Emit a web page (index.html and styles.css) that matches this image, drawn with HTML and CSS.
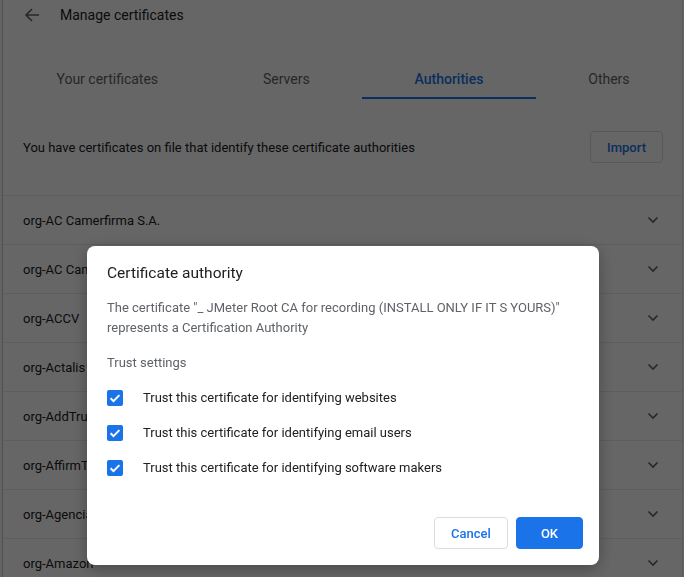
FILE: index.html
```html
<!DOCTYPE html>
<html>
<head>
<meta charset="utf-8">
<link rel="stylesheet" href="styles.css">
</head>
<body>
<div class="page">
  <div class="card">
    <div class="header">
      <svg class="back" width="16" height="16" viewBox="0 0 16 16"><path d="M15 8H2.5M8 2L2 8l6 6" fill="none" stroke="#5f6368" stroke-width="1.6"/></svg>
      <span class="title">Manage certificates</span>
    </div>
    <div class="tabs">
      <div class="tab">Your certificates</div>
      <div class="tab">Servers</div>
      <div class="tab active">Authorities</div>
      <div class="tab">Others</div>
    </div>
    <div class="intro">
      <span>You have certificates on file that identify these certificate authorities</span>
      <button class="import">Import</button>
    </div>
    <div class="row"><span>org-AC Camerfirma S.A.</span><svg class="chev" width="20" height="20" viewBox="0 0 20 20"><path d="M5.5 7.5L10 12l4.5-4.5" fill="none" stroke="#5f6368" stroke-width="1.6"/></svg></div>
    <div class="row"><span>org-AC Camerfirma SA CIF A82743287</span><svg class="chev" width="20" height="20" viewBox="0 0 20 20"><path d="M5.5 7.5L10 12l4.5-4.5" fill="none" stroke="#5f6368" stroke-width="1.6"/></svg></div>
    <div class="row"><span>org-ACCV</span><svg class="chev" width="20" height="20" viewBox="0 0 20 20"><path d="M5.5 7.5L10 12l4.5-4.5" fill="none" stroke="#5f6368" stroke-width="1.6"/></svg></div>
    <div class="row"><span>org-Actalis S.p.A./03358520967</span><svg class="chev" width="20" height="20" viewBox="0 0 20 20"><path d="M5.5 7.5L10 12l4.5-4.5" fill="none" stroke="#5f6368" stroke-width="1.6"/></svg></div>
    <div class="row"><span>org-AddTrust AB</span><svg class="chev" width="20" height="20" viewBox="0 0 20 20"><path d="M5.5 7.5L10 12l4.5-4.5" fill="none" stroke="#5f6368" stroke-width="1.6"/></svg></div>
    <div class="row"><span>org-AffirmTrust</span><svg class="chev" width="20" height="20" viewBox="0 0 20 20"><path d="M5.5 7.5L10 12l4.5-4.5" fill="none" stroke="#5f6368" stroke-width="1.6"/></svg></div>
    <div class="row"><span>org-Agencia Catalana de Certificacio</span><svg class="chev" width="20" height="20" viewBox="0 0 20 20"><path d="M5.5 7.5L10 12l4.5-4.5" fill="none" stroke="#5f6368" stroke-width="1.6"/></svg></div>
    <div class="row"><span>org-Amazon</span><svg class="chev" width="20" height="20" viewBox="0 0 20 20"><path d="M5.5 7.5L10 12l4.5-4.5" fill="none" stroke="#5f6368" stroke-width="1.6"/></svg></div>
  </div>
</div>
<div class="overlay"></div>
<div class="dialog">
  <div class="dlg-title">Certificate authority</div>
  <div class="dlg-text">The certificate "_ JMeter Root CA for recording (INSTALL ONLY IF IT S YOURS)" represents a Certification Authority</div>
  <div class="dlg-text trust">Trust settings</div>
  <div class="checks">
    <label class="check"><span class="box"><svg width="16" height="16" viewBox="0 0 16 16"><path d="M3.6 8.2l2.9 2.9 5.9-6" fill="none" stroke="#fff" stroke-width="2"/></svg></span>Trust this certificate for identifying websites</label>
    <label class="check"><span class="box"><svg width="16" height="16" viewBox="0 0 16 16"><path d="M3.6 8.2l2.9 2.9 5.9-6" fill="none" stroke="#fff" stroke-width="2"/></svg></span>Trust this certificate for identifying email users</label>
    <label class="check"><span class="box"><svg width="16" height="16" viewBox="0 0 16 16"><path d="M3.6 8.2l2.9 2.9 5.9-6" fill="none" stroke="#fff" stroke-width="2"/></svg></span>Trust this certificate for identifying software makers</label>
  </div>
  <div class="actions">
    <button class="btn cancel">Cancel</button>
    <button class="btn ok">OK</button>
  </div>
</div>
</body>
</html>
```
FILE: styles.css
```css
* { box-sizing: border-box; }
html, body { margin: 0; padding: 0; }
body {
  width: 684px;
  height: 577px;
  overflow: hidden;
  background: #f8f9fa;
  font-family: Roboto, "Liberation Sans", sans-serif;
  font-size: 13px;
  color: #202124;
}
.page {
  padding-left: 2px;
  padding-right: 1px;
  height: 577px;
}
.card {
  background: #fff;
  border-left: 1px solid #c8c8c8;
  border-right: 1px solid #e0e0e0;
  height: 100%;
}
.header {
  height: 30px;
  display: flex;
  align-items: center;
  padding-left: 21px;
}
.back { display: block; }
.title {
  margin-left: 20px;
  font-size: 14px;
  color: #202124;
}
.tabs {
  margin-top: 29px;
  display: flex;
  height: 40px;
  padding-left: 1px;
}
.tab {
  flex: 1 1 auto;
  display: flex;
  align-items: center;
  justify-content: center;
  font-size: 14px;
  color: #5f6368;
  border-bottom: 2px solid transparent;
  padding-top: 2px;
}
.tab.active {
  color: #1a73e8;
  font-weight: 500;
  border-bottom-color: #1a73e8;
}
.intro {
  display: flex;
  align-items: center;
  justify-content: space-between;
  padding: 32px 19px 32px 20px;
  border-bottom: 1px solid #e8eaed;
}
.import {
  height: 32px;
  padding: 0 16px;
  background: #fff;
  border: 1px solid #dadce0;
  border-radius: 4px;
  font-family: inherit;
  font-size: 13px;
  font-weight: 500;
  color: #1a73e8;
}
.row {
  height: 49px;
  display: flex;
  align-items: center;
  justify-content: space-between;
  padding: 0 19px 0 20px;
  border-bottom: 1px solid #e8eaed;
}
.chev { display: block; }
.overlay {
  position: fixed;
  inset: 0;
  background: rgba(0, 0, 0, 0.6);
}
.dialog {
  position: fixed;
  left: 87px;
  top: 246px;
  width: 512px;
  height: 319px;
  background: #fff;
  border-radius: 8px;
  box-shadow: 0 4px 16px rgba(0,0,0,0.3);
  padding: 17px 16px 16px 20px;
  display: flex;
  flex-direction: column;
}
.dlg-title {
  font-size: 15.5px;
  line-height: 20px;
  color: #202124;
}
.dlg-text {
  margin-top: 15px;
  line-height: 20px;
  color: #5f6368;
  padding-right: 20px;
}
.checks {
  margin-top: 7px;
  display: flex;
  flex-direction: column;
}
.check {
  height: 35px;
  display: flex;
  align-items: center;
  color: #202124;
}
.box {
  width: 16px;
  height: 16px;
  border-radius: 2px;
  background: #1a73e8;
  margin-right: 20px;
  display: flex;
}
.actions {
  margin-top: auto;
  display: flex;
  justify-content: flex-end;
  gap: 8px;
}
.btn {
  height: 32px;
  border-radius: 4px;
  font-family: inherit;
  font-size: 13px;
  font-weight: 500;
}
.cancel {
  width: 74px;
  background: #fff;
  border: 1px solid #dadce0;
  color: #1a73e8;
}
.ok {
  width: 67px;
  background: #1a73e8;
  border: 1px solid #1a73e8;
  color: #fff;
}
```
